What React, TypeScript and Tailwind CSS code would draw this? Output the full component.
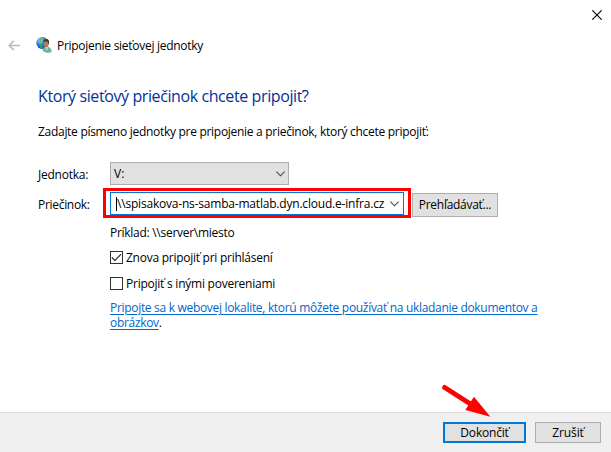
import React from "react";

function Chevron() {
  return (
    <svg className="shrink-0" width="9" height="6" viewBox="0 0 9 6" fill="none" stroke="#444" strokeWidth="1.1">
      <path d="M0.4 0.7 4.5 4.8 8.6 0.7" />
    </svg>
  );
}

function NetworkUserIcon() {
  return (
    <svg width="16" height="16" viewBox="0 0 16 16">
      <defs>
        <radialGradient id="globe" cx="0.35" cy="0.3" r="0.75">
          <stop offset="0" stopColor="#9fe4ff" />
          <stop offset="0.45" stopColor="#2d83dc" />
          <stop offset="1" stopColor="#123a9c" />
        </radialGradient>
      </defs>
      <circle cx="6.3" cy="6" r="6" fill="url(#globe)" />
      <path d="M4 1.2 6.8 0.7 8 2.2 6 4 5 6.3 3.6 5 3 3z" fill="#5fc463" opacity="0.85" />
      <path d="M3.4 7 6.2 8.2 6.2 11 4.5 11.2z" fill="#2fae4c" />
      <path d="M6.5 13.5Q6.8 10 10 9.6L13 10Q15.6 11.4 15.8 15L12 16 8.5 15z" fill="#6fb495" />
      <path d="M9 10 11 14 12.2 10z" fill="#b9dfcc" />
      <ellipse cx="10.2" cy="6.6" rx="2.5" ry="3.6" fill="#b97b52" />
      <path d="M7.2 5Q7.4 1.8 10.5 2 13.4 2.2 13 5.8L12.2 8 11.7 4.8 8.8 4.3 7.7 6z" fill="#4b3528" />
    </svg>
  );
}

function Checkbox({ checked }: { checked?: boolean }) {
  return (
    <span className="flex h-[13px] w-[13px] shrink-0 items-center justify-center border border-[#333] bg-white">
      {checked && (
        <svg className="shrink-0" width="11" height="11" viewBox="0 0 11 11" fill="none" stroke="#222" strokeWidth="1.1">
          <path d="M0.9 5.5 3.9 8.4 10.1 2.2" />
        </svg>
      )}
    </span>
  );
}

export default function App() {
  return (
    <div className="relative flex h-[452px] w-[611px] flex-col overflow-hidden bg-white font-['Open_Sans','Noto_Sans',sans-serif] text-[12px] leading-4 whitespace-nowrap text-black">
      <div className="flex h-[30px] shrink-0 justify-end pt-[10px] pr-[9px]">
        <svg width="10" height="10" viewBox="0 0 10 10" stroke="#000" strokeWidth="1.1">
          <path d="M0.3 0.3 9.7 9.7M9.7 0.3 0.3 9.7" />
        </svg>
      </div>

      <header className="flex h-[30px] shrink-0 items-center pl-2">
        <svg width="12" height="11" viewBox="0 0 12 11" fill="none" stroke="#bdbdbd" strokeWidth="1.7">
          <path d="M12 5.5H1.2M5.8 0.8 1.1 5.5 5.8 10.2" />
        </svg>
        <span className="ml-4">
          <NetworkUserIcon />
        </span>
        <h1 className="ml-[5px] pt-[2px] tracking-[-0.28px]">Pripojenie sieťovej jednotky</h1>
      </header>

      <main className="flex h-[352px] shrink-0 flex-col pl-[38px]">
        <h2 className="mt-6 h-6 text-[16px] leading-6 tracking-[-0.4px] text-[#003399]">
          Ktorý sieťový priečinok chcete pripojiť?
        </h2>
        <p className="mt-4 h-4 tracking-[-0.29px]">
          Zadajte písmeno jednotky pre pripojenie a priečinok, ktorý chcete pripojiť:
        </p>

        <div className="mt-[22px] flex h-[23px]">
          <span className="w-[72px] pt-[5px] tracking-[-0.25px]">Jednotka:</span>
          <div className="flex w-[179px] items-center justify-between border border-[#adadad] bg-[#e1e1e1] pr-[3px] pl-[3px]">
            <span>V:</span>
            <Chevron />
          </div>
        </div>

        <div className="mt-[3px] flex h-[30px]">
          <span className="w-[65px] pt-[9px] tracking-[-0.3px]">Priečinok:</span>
          <div className="flex w-[308px] border-[3px] border-[#ff0000] px-1 py-px">
            <div className="flex h-[23px] w-full items-center justify-between border border-[#0078d7] bg-white pr-1 pl-[5px]">
              <span className="flex items-center">
                <span className="h-[14px] w-px bg-black" />
                <span className="tracking-[-0.2px]">{"\\\\spisakova-ns-samba-matlab.dyn.cloud.e-infra.cz"}</span>
              </span>
              <Chevron />
            </div>
          </div>
          <button className="mt-[5px] ml-px h-6 w-[86px] border border-[#adadad] bg-[#e1e1e1] tracking-[-0.28px]">
            Prehľadávať...
          </button>
        </div>

        <div className="ml-[72px] flex w-[440px] flex-col">
          <span className="mt-[7px] h-4 tracking-[-0.28px]">{"Príklad: \\\\server\\miesto"}</span>
          <label className="mt-[8px] flex h-4 items-center gap-[3px]">
            <Checkbox checked />
            <span className="pt-px tracking-[-0.26px]">Znova pripojiť pri prihlásení</span>
          </label>
          <label className="mt-[10px] flex h-4 items-center gap-[3px]">
            <Checkbox />
            <span className="pt-px tracking-[-0.24px]">Pripojiť s inými povereniami</span>
          </label>
          <p className="mt-[9px] leading-[15px] tracking-[-0.31px]">
            <a className="text-[#0066cc] underline decoration-1 underline-offset-2">
              Pripojte sa k webovej lokalite, ktorú môžete používať na ukladanie dokumentov a
              <br />
              obrázkov
            </a>
            .
          </p>
        </div>
      </main>

      <footer className="flex h-10 shrink-0 justify-end gap-[9px] border-t border-[#dfdfdf] bg-[#f0f0f0] pt-[9px] pr-[10px]">
        <button className="h-[21px] w-[83px] border-2 border-[#0078d7] bg-[#e1e1e1] leading-4 tracking-[-0.2px]">Dokončiť</button>
        <button className="h-[21px] w-[66px] border border-[#adadad] bg-[#e1e1e1] leading-4 tracking-[-0.1px]">Zrušiť</button>
      </footer>

      <svg className="absolute top-[382px] left-[440px]" width="52" height="36" viewBox="0 0 52 36">
        <path d="M4.7 5.5 32 23" stroke="#ff0000" strokeWidth="5" strokeLinecap="round" />
        <path d="M50.3 34.8 25.3 28 34 14.7z" fill="#ff0000" />
      </svg>
    </div>
  );
}
